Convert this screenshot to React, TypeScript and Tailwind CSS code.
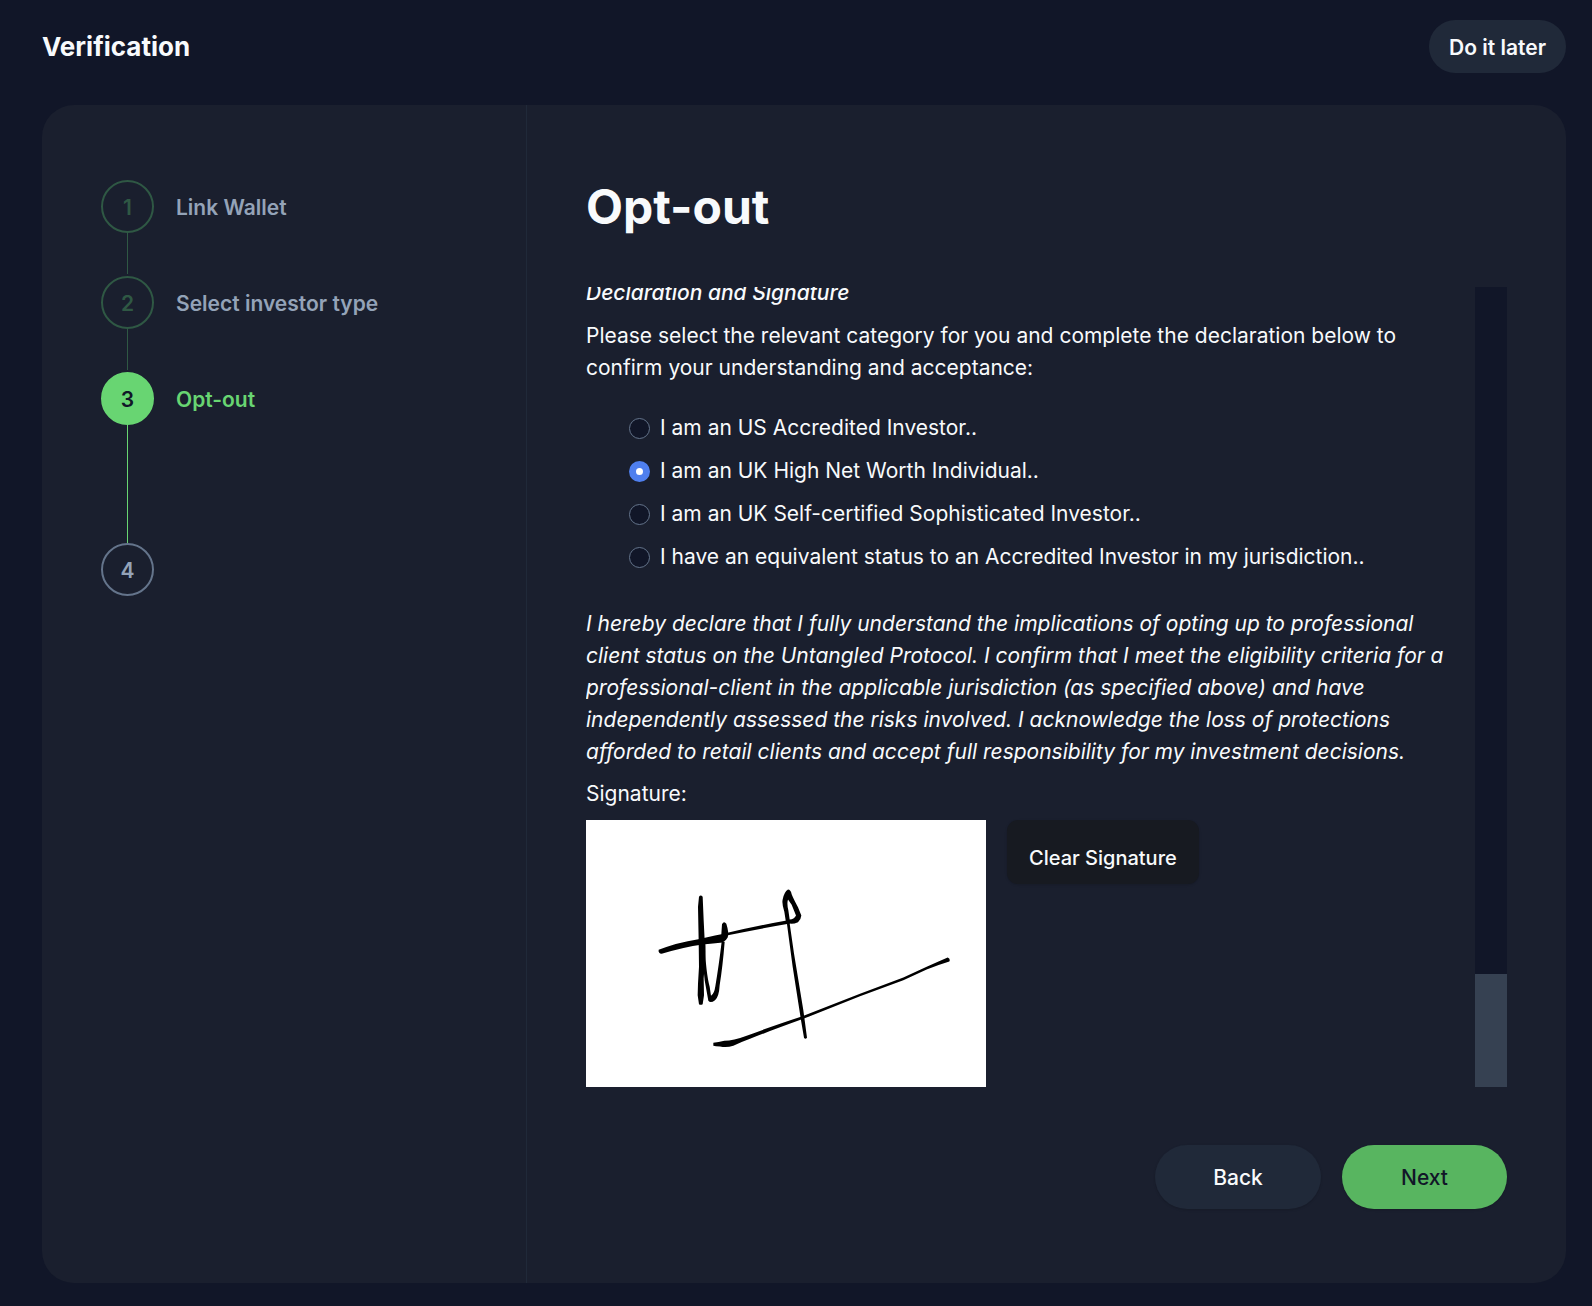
import { useState } from "react";

type StepState = "done" | "current" | "upcoming";

const steps: { label: string; state: StepState; line?: string }[] = [
  { label: "Link Wallet", state: "done", line: "h-[41px] mb-[2px] bg-[#2f5844]" },
  { label: "Select investor type", state: "done", line: "h-[41px] mb-[2px] bg-[#2f5844]" },
  { label: "Opt-out", state: "current", line: "h-[118px] bg-[#68d572]" },
  { label: "", state: "upcoming" },
];

const circleStyles: Record<StepState, string> = {
  done: "border-[#2f5844] text-[#2f5844]",
  current: "border-[#68d572] bg-[#68d572] text-[#111628]",
  upcoming: "border-[#64748b] text-[#94a3b8]",
};

const categories = [
  "I am an US Accredited Investor..",
  "I am an UK High Net Worth Individual..",
  "I am an UK Self-certified Sophisticated Investor..",
  "I have an equivalent status to an Accredited Investor in my jurisdiction..",
];

function Stepper() {
  return (
    <ol>
      {steps.map((step, i) => (
        <li key={i} aria-current={step.state === "current" ? "step" : undefined}>
          <div className="flex items-center gap-[22px]">
            <span
              className={`flex size-[53px] shrink-0 items-center justify-center rounded-full border-2 pt-0.5 text-[21px] font-semibold ${circleStyles[step.state]}`}
            >
              {i + 1}
            </span>
            <span
              className={`pt-0.5 text-[21px] leading-8 font-semibold ${step.state === "current" ? "text-[#68d572]" : "text-[#94a3b8]"}`}
            >
              {step.label}
            </span>
          </div>
          {step.line && <div className={`ml-[26px] w-px ${step.line}`} />}
        </li>
      ))}
    </ol>
  );
}

function Signature() {
  return (
    <svg viewBox="48 60 1200 800" className="h-full w-full" role="img" aria-label="Signature">
      <path d="M387 290Q392 282 398 290L401 360L404 420Q408 430 406 470L401 535L402 585L398 612Q392 616 387 612L383 585L384 550L387 500L386 420L384 320Z" />
      <path d="M404 430Q408 520 419 560L423 587Q433 580 436 558Q446 500 455 425L464 425Q458 500 449 555Q447 590 435 600Q422 610 415 602L404 540L393 430Z" />
      <path d="M456 372Q462 361 469 371Q478 400 473 412Q468 422 458 427Q430 430 398 433Q340 441 275 461Q264 460 266 449Q320 427 385 417L435 406L454 402Z" />
      <path d="M466 399Q560 377 650 361L660 370Q560 387 466 407Z" />
      <path d="M648 367L643 335Q635 310 638 298Q642 276 654 268Q662 268 665 282Q670 295 684 321L694 346Q693 358 684 366Q670 372 659 370L672 460L700 630L711 713Q706 719 702 713L693 660L668 500L651 372ZM654 298Q650 310 655 330L659 358Q672 358 678 346L665 314Z" fillRule="evenodd" />
      <path d="M430 728Q445 727 463 722Q490 722 530 707Q600 680 695 649L870 581L1000 532L1070 500Q1105 484 1133 472Q1142 476 1138 484Q1105 494 1070 508L1000 540L870 588L700 656Q600 692 540 716Q510 727 490 737Q470 743 450 739Q436 739 430 737Z" />
    </svg>
  );
}

export default function App() {
  const [category, setCategory] = useState(1);
  const [signed, setSigned] = useState(true);

  return (
    <div className="flex min-h-screen flex-col bg-[#111628] px-[26px] pt-5 pb-[23px] pl-[42px] font-['Inter',sans-serif] text-[21px] leading-8 text-slate-50">
      <header className="flex items-center justify-between">
        <h1 className="text-[26px] font-bold">Verification</h1>
        <button type="button" className="h-[53px] rounded-full bg-[#202939] px-5 pt-0.5 font-semibold">
          Do it later
        </button>
      </header>

      <main className="mt-8 flex flex-1 rounded-[32px] bg-[#1a1f2e]">
        <nav aria-label="Verification steps" className="w-[485px] shrink-0 border-r border-[#202939] px-[59px] pt-[75px]">
          <Stepper />
        </nav>

        <section className="flex min-w-0 flex-1 flex-col px-[59px] pt-[70px] pb-[74px]">
          <h2 className="text-[48px] leading-[64px] font-bold">Opt-out</h2>

          <div className="mt-12 flex h-[800px]">
            <div className="flex min-w-0 flex-1 flex-col justify-end overflow-hidden">
              <h3 className="font-medium [font-style:oblique_10deg]">Declaration and Signature</h3>
              <p className="mt-[11px]">
                Please select the relevant category for you and complete the declaration below to confirm your
                understanding and acceptance:
              </p>
              <fieldset className="mt-7 ml-[43px] flex flex-col gap-[11px]">
                {categories.map((text, i) => (
                  <label key={text} className="flex items-center gap-[10px]">
                    <input
                      type="radio"
                      name="category"
                      checked={category === i}
                      onChange={() => setCategory(i)}
                      className="size-[21px] shrink-0 appearance-none rounded-full border border-[#64748b] bg-[#111628] checked:border-[7px] checked:border-[#4f7fee] checked:bg-white"
                    />
                    {text}
                  </label>
                ))}
              </fieldset>
              <p className="mt-[35px] pr-4 [font-style:oblique_10deg]">
                I hereby declare that I fully understand the implications of opting up to professional client status on
                the Untangled Protocol. I confirm that I meet the eligibility criteria for a professional-client in the
                applicable jurisdiction (as specified above) and have independently assessed the risks involved. I
                acknowledge the loss of protections afforded to retail clients and accept full responsibility for my
                investment decisions.
              </p>
              <p className="mt-[10px]">Signature:</p>
              <div className="mt-[10px] flex items-start gap-[21px]">
                <div className="h-[267px] w-[400px] shrink-0 bg-white text-black">{signed && <Signature />}</div>
                <button
                  type="button"
                  onClick={() => setSigned(false)}
                  className="h-16 rounded-[11px] bg-[#171a21] px-[22px] pt-[11px] text-[20px] font-medium shadow-sm"
                >
                  Clear Signature
                </button>
              </div>
            </div>
            <div className="flex w-8 shrink-0 flex-col justify-end bg-[#111628]">
              <div className="h-[113px] bg-[#364152]" />
            </div>
          </div>

          <div className="mt-[58px] flex justify-end gap-[21px]">
            <button type="button" className="h-16 w-[166px] rounded-full bg-[#202939] pt-0.5 font-medium shadow-sm">
              Back
            </button>
            <button type="button" className="h-16 w-[165px] rounded-full bg-[#58b560] pt-0.5 font-medium text-[#111628] shadow-sm">
              Next
            </button>
          </div>
        </section>
      </main>
    </div>
  );
}
